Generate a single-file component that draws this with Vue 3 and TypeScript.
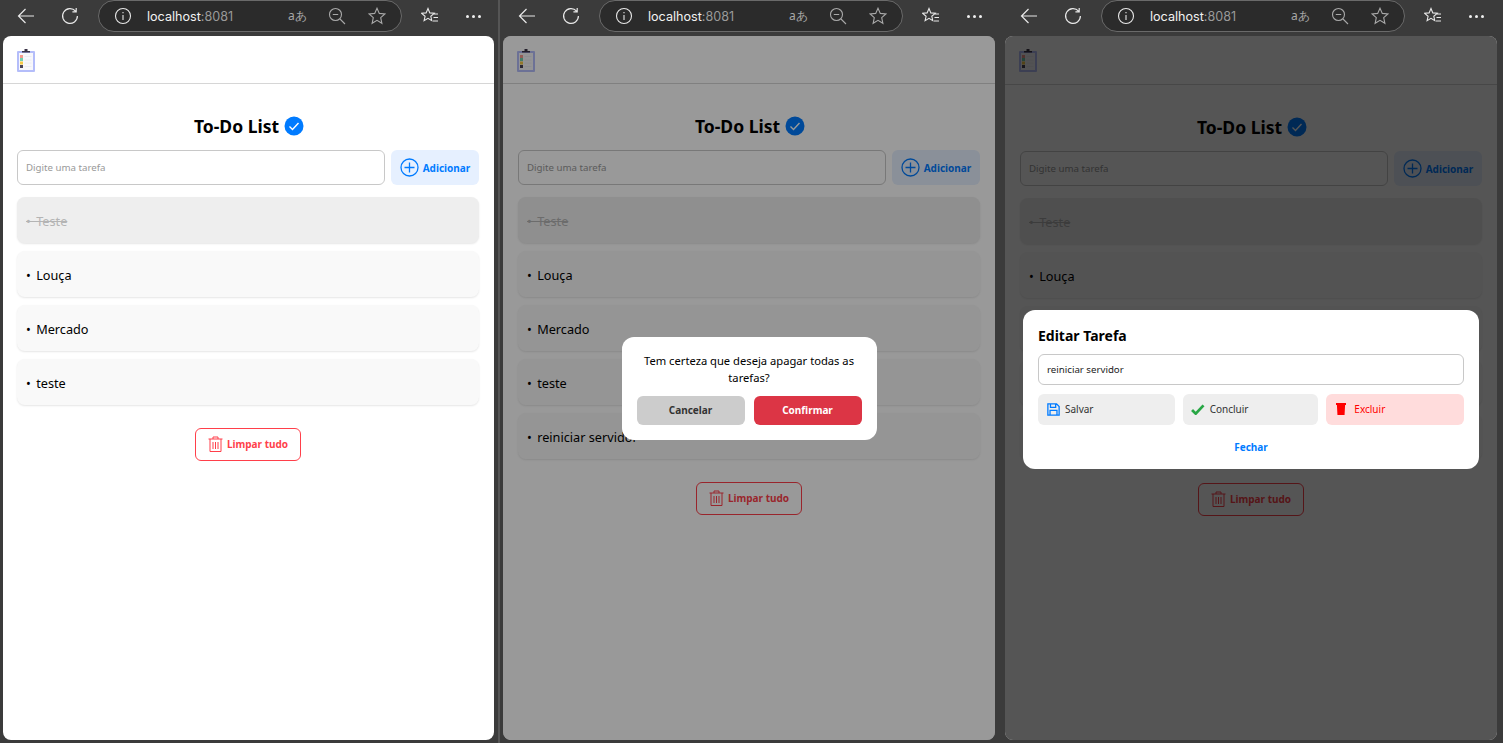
<script setup lang="ts">
type Pane = {
  tasks: string[]
  modal: '' | 'confirm' | 'edit'
}

const panes: Pane[] = [
  { tasks: ['Louça', 'Mercado', 'teste'], modal: '' },
  { tasks: ['Louça', 'Mercado', 'teste', 'reiniciar servidor'], modal: 'confirm' },
  { tasks: ['Louça', 'Mercado', 'teste', 'reiniciar servidor'], modal: 'edit' }
]
</script>

<template>
  <div class="screen">
    <div v-for="(pane, i) in panes" :key="i" class="window" :class="`window-${i}`">
      <div class="toolbar">
        <svg class="tb back" width="18" height="16" viewBox="0 0 18 16" fill="none" stroke="#e8e8e8" stroke-width="1.2"><path d="M17 8H1.5M8.5 1 1.5 8l7 7" /></svg>
        <svg class="tb reload" width="18" height="18" viewBox="0 0 18 18" fill="none" stroke="#e8e8e8" stroke-width="1.2"><path d="M14.6 4.2A7.4 7.4 0 1 0 16.4 9M15.2 1v3.8h-3.8" /></svg>
        <div class="url">
          <svg width="18" height="18" viewBox="0 0 18 18" fill="none" stroke="#e8e8e8" stroke-width="1.1"><circle cx="9" cy="9" r="7.5" /><path d="M9 8v5M9 5v1.3" /></svg>
          <span class="host">localhost<span class="port">:8081</span></span>
          <span class="read">aあ</span>
          <svg class="zoomout" width="18" height="18" viewBox="0 0 18 18" fill="none" stroke="#a8a8a8" stroke-width="1.1"><circle cx="7.5" cy="7.5" r="6" /><path d="M4.8 7.5h5.4M12 12l5 5" /></svg>
          <svg class="star" width="18" height="18" viewBox="0 0 18 18" fill="none" stroke="#a8a8a8" stroke-width="1.1"><path d="M9 1.2l2.3 5.2 5.6.6-4.2 3.7 1.2 5.6L9 13.4l-4.9 2.9 1.2-5.6L1.1 7l5.6-.6z" /></svg>
        </div>
        <svg class="tb favs" width="18" height="18" viewBox="0 0 18 18" fill="none" stroke="#e8e8e8" stroke-width="1.1"><path d="M7 1.5l1.8 4.4 4.4.4-3.4 3 1 4.4L7 11.4l-3.9 2.3 1-4.4-3.4-3 4.4-.4zM12 7h5M12.5 10.500h4.500M12 14h5" /></svg>
        <div class="dots"><i></i><i></i><i></i></div>
      </div>

      <div class="viewport">
        <div class="appbar">
          <svg width="20" height="26" viewBox="0 0 20 26">
            <rect x="1" y="3" width="18" height="21" rx="1" fill="#b4bdfa" />
            <rect x="3" y="5" width="14" height="17" fill="#f7f7fb" />
            <path d="M6 4V3h2.500V1h3v2H14v1.500H6z" fill="#3b3346" />
            <rect x="4" y="7" width="3" height="3" fill="#f49a8c" />
            <rect x="4" y="10" width="3" height="3" fill="#6fd0ae" />
            <rect x="4" y="13.500" width="3" height="3" fill="#f6c945" />
            <rect x="4" y="17" width="3" height="3" fill="#4a4458" />
            <path d="M8.500 8.500h7M8.500 12h7M8.500 15h7M8.500 18.500h7" stroke="#ececf2" />
          </svg>
        </div>

        <div class="content">
          <h1 class="title">
            To-Do List
            <svg width="20" height="20" viewBox="0 0 20 20"><circle cx="10" cy="10" r="9.500" fill="#007bff" /><path d="M5.500 10.500l3 3 6-6.500" fill="none" stroke="#fff" stroke-width="1.400" /></svg>
          </h1>

          <div class="add-row">
            <div class="input placeholder">Digite uma tarefa</div>
            <button class="add">
              <svg width="19" height="19" viewBox="0 0 19 19" fill="none" stroke="#007bff" stroke-width="1.300"><circle cx="9.500" cy="9.500" r="8.500" /><path d="M9.500 4.500v10M4.500 9.500h10" /></svg>
              Adicionar
            </button>
          </div>

          <ul class="tasks">
            <li class="task done">•&thinsp; Teste</li>
            <li v-for="task in pane.tasks" :key="task" class="task">•&thinsp; {{ task }}</li>
          </ul>

          <button class="clear">
            <svg width="15" height="16" viewBox="0 0 15 16" fill="none" stroke="#ff3f4a" stroke-width="1"><path d="M.5 3h14M5 3V1h5v2M2 3v12.500h11V3M5 6v7M7.500 6v7M10 6v7" /></svg>
            Limpar tudo
          </button>
        </div>

        <div v-if="pane.modal" class="overlay" :class="`overlay-${pane.modal}`">
          <div v-if="pane.modal === 'confirm'" class="confirm">
            <p>Tem certeza que deseja apagar todas as tarefas?</p>
            <div class="confirm-actions">
              <button class="cancel">Cancelar</button>
              <button class="ok">Confirmar</button>
            </div>
          </div>

          <div v-else class="edit">
            <h2>Editar Tarefa</h2>
            <div class="input edit-input">reiniciar servidor</div>
            <div class="edit-actions">
              <button class="action save">
                <svg width="13" height="13" viewBox="0 0 15 15" fill="none" stroke="#007bff" stroke-width="1.500"><path d="M1 1h10l3 3v10H1zM4 1v4h6V1M3.500 14V8.500h8V14" /></svg>
                Salvar
              </button>
              <button class="action finish">
                <svg width="14" height="11" viewBox="0 0 15 12" fill="none" stroke="#28a745" stroke-width="3"><path d="M1 6.500l4 4 8.500-9" /></svg>
                Concluir
              </button>
              <button class="action danger">
                <svg width="10" height="12" viewBox="0 0 11 13" fill="#ff0000"><path d="M0 0h11v2H0zM1 2h9l-.6 11H1.600z" /></svg>
                Excluir
              </button>
            </div>
            <div class="close">Fechar</div>
          </div>
        </div>
      </div>
    </div>
  </div>
</template>

<style>
html, body { margin: 0; background: #3b3b3b; }
</style>

<style scoped>
* { box-sizing: border-box; }

.screen {
  display: flex;
  width: 1503px;
  height: 743px;
  overflow: hidden;
  font-family: "Noto Sans", "Open Sans", sans-serif;
  background: #3b3b3b;
}

.window {
  flex: none;
  display: flex;
  flex-direction: column;
}
.window-0 { width: 500px; margin-right: 1px; border-right: 2px solid #555; }
.window-1 { width: 502px; }
.window-2 { width: 500px; }

.toolbar {
  height: 36px;
  flex: none;
  display: flex;
  align-items: center;
  padding: 0 0 4px 17px;
}
.reload { margin-left: 26px; }
.url {
  width: 304px;
  height: 32px;
  margin-left: 19px;
  display: flex;
  align-items: center;
  padding-left: 15px;
  border: 1px solid #6a6a6a;
  border-radius: 16px;
  background: #2b2b2b;
}
.host {
  margin-left: 15px;
  width: 141px;
  font-family: "Inter", sans-serif;
  font-size: 12.600px;
  color: #f2f2f2;
}
.port { color: #9a9a9a; }
.read { width: 40px; font-size: 12px; color: #a8a8a8; }
.star { margin-left: 22px; }
.favs { margin-left: 19px; }
.dots { display: flex; gap: 3px; margin-left: 27px; }
.dots i { width: 3px; height: 3px; border-radius: 50%; background: #f0f0f0; }

.viewport {
  position: relative;
  width: 491px;
  height: 704px;
  margin-left: 3px;
  border-radius: 8px;
  overflow: hidden;
  background: #fff;
  color: #000;
}
.window-1 .viewport,
.window-2 .viewport { width: 492px; margin-left: 2px; }

.appbar {
  height: 48px;
  padding: 12px 0 0 13px;
  border-bottom: 1px solid #d6d6d6;
}
.window-2 .appbar { height: 49px; }

.content { padding: 30px 15px 0 14px; }
.window-1 .content,
.window-2 .content { padding-left: 15px; }

.title {
  display: flex;
  justify-content: center;
  align-items: center;
  gap: 5px;
  height: 24px;
  margin: 0 0 12px 2px;
  font-size: 17.500px;
  font-weight: 700;
}
.title svg { flex: none; }

.add-row { display: flex; gap: 6px; }
.input {
  display: flex;
  align-items: center;
  border: 1px solid #c8c8c8;
  border-radius: 6px;
  background: #fff;
  font-size: 9.700px;
}
.placeholder {
  flex: 1;
  height: 35px;
  padding-left: 8px;
  color: #999;
}
.add {
  width: 88px;
  height: 35px;
  display: flex;
  align-items: center;
  justify-content: center;
  gap: 4px;
  padding: 0;
  border: 0;
  border-radius: 6px;
  background: #e6f0ff;
  color: #007bff;
  font: 700 10px "Noto Sans", sans-serif;
}

.tasks {
  list-style: none;
  margin: 12px 0 0;
  padding: 0;
  display: flex;
  flex-direction: column;
  gap: 8px;
}
.task {
  height: 46px;
  display: flex;
  align-items: center;
  padding: 1px 0 0 9px;
  border-radius: 8px;
  background: #f9f9f9;
  box-shadow: 0 1px 2px rgba(0, 0, 0, 0.1);
  font-size: 12.700px;
  white-space: pre;
}
.done {
  background: #eee;
  color: #b4b4b4;
  text-decoration: line-through;
}

.clear {
  width: 106px;
  height: 33px;
  margin: 23px auto 0;
  display: flex;
  align-items: center;
  justify-content: center;
  gap: 4px;
  padding: 0 0 1px;
  border: 1px solid #ff3f4a;
  border-radius: 6px;
  background: #fff;
  color: #ff3f4a;
  font: 700 10px "Noto Sans", sans-serif;
}

.overlay {
  position: absolute;
  inset: 0;
  display: flex;
  align-items: center;
  justify-content: center;
}
.overlay-confirm { background: rgba(0, 0, 0, 0.4); }
.overlay-edit { background: rgba(0, 0, 0, 0.667); }

.confirm {
  width: 255px;
  height: 103px;
  margin-top: 1px;
  padding: 15px;
  border-radius: 12px;
  background: #fff;
  text-align: center;
  font-size: 11.200px;
  line-height: 17px;
}
.confirm p { margin: 0 0 10px; }
.confirm-actions { display: flex; gap: 9px; }
.confirm-actions button {
  flex: 1;
  height: 29px;
  padding: 0 0 1px;
  border: 0;
  border-radius: 6px;
  font: 700 10px "Noto Sans", sans-serif;
}
.cancel { background: #ccc; color: #333; }
.ok { background: #dc3545; color: #fff; }

.edit {
  width: 456px;
  height: 159px;
  margin-top: 3px;
  padding: 15px;
  border-radius: 12px;
  background: #fff;
}
.edit h2 {
  margin: 1px 0 8px;
  height: 20px;
  font-size: 14px;
  line-height: 20px;
  font-weight: 700;
}
.edit-input {
  height: 31px;
  padding-left: 8px;
  color: #222;
}
.edit-actions { display: flex; gap: 8px; margin-top: 9px; }
.action {
  flex: 1;
  height: 31px;
  display: flex;
  align-items: center;
  gap: 5px;
  padding: 0 0 1px 9px;
  border: 0;
  border-radius: 6px;
  background: #eee;
  color: #333;
  font: 400 10px "Noto Sans", sans-serif;
}
.finish { padding-left: 8px; }
.danger { background: #ffdcdc; color: #f00; padding-left: 10px; gap: 8px; }
.close {
  margin-top: 15px;
  text-align: center;
  color: #007bff;
  font-size: 10px;
  font-weight: 700;
}
</style>
